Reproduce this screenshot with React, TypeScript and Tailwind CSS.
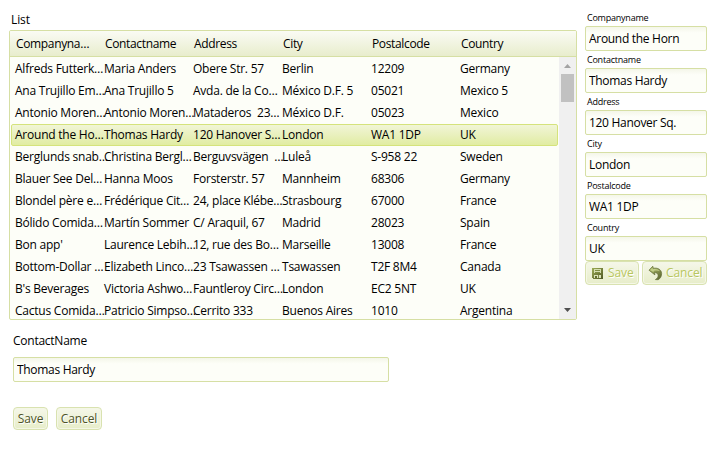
import React, { useState } from "react";

const columns = ["Companyna…", "Contactname", "Address", "City", "Postalcode", "Country"];

const rows: string[][] = [
  ["Alfreds Futterk…", "Maria Anders", "Obere Str. 57", "Berlin", "12209", "Germany"],
  ["Ana Trujillo Em…", "Ana Trujillo 5", "Avda. de la Co…", "México D.F. 5", "05021", "Mexico 5"],
  ["Antonio Moren…", "Antonio Moren…", "Mataderos  23…", "México D.F.", "05023", "Mexico"],
  ["Around the Ho…", "Thomas Hardy", "120 Hanover S…", "London", "WA1 1DP", "UK"],
  ["Berglunds snab…", "Christina Bergl…", "Berguvsvägen  …", "Luleå", "S-958 22", "Sweden"],
  ["Blauer See Del…", "Hanna Moos", "Forsterstr. 57", "Mannheim", "68306", "Germany"],
  ["Blondel père e…", "Frédérique Cit…", "24, place Klébe…", "Strasbourg", "67000", "France"],
  ["Bólido Comida…", "Martín Sommer", "C/ Araquil, 67", "Madrid", "28023", "Spain"],
  ["Bon app'", "Laurence Lebih…", "12, rue des Bo…", "Marseille", "13008", "France"],
  ["Bottom-Dollar …", "Elizabeth Linco…", "23 Tsawassen …", "Tsawassen", "T2F 8M4", "Canada"],
  ["B's Beverages", "Victoria Ashwo…", "Fauntleroy Circ…", "London", "EC2 5NT", "UK"],
  ["Cactus Comida…", "Patricio Simpso…", "Cerrito 333", "Buenos Aires", "1010", "Argentina"],
];

const fields: [string, string][] = [
  ["Companyname", "Around the Horn"],
  ["Contactname", "Thomas Hardy"],
  ["Address", "120 Hanover Sq."],
  ["City", "London"],
  ["Postalcode", "WA1 1DP"],
  ["Country", "UK"],
];

const inputStyle =
  "block rounded-[2px] border border-[#d6dfa4] bg-[#fdfef8] bg-linear-to-b from-[#f4f6e9] to-[#fdfef8] to-25% pl-[3px] outline-none";
const buttonStyle =
  "flex items-center rounded-[4px] border border-[#d9e2b0] bg-linear-to-b from-[#f5f7e9] to-[#e7edc9] shadow-[inset_0_0_0_1px_#f4f7e6] [text-shadow:1px_1px_0_#fff]";

function SaveIcon() {
  return (
    <svg width="11" height="11" viewBox="0 0 11 11" shapeRendering="crispEdges">
      <defs>
        <linearGradient id="disk" x1="0" y1="0" x2="1" y2="1">
          <stop offset="0" stopColor="#9dac55" />
          <stop offset="1" stopColor="#4f5826" />
        </linearGradient>
      </defs>
      <path d="M0 0h11v11H1L0 10z" fill="url(#disk)" />
      <path d="M2 1h7v4H2z" fill="#d5deb0" />
      <path d="M3 2h5v1H3zM3 4h5v1H3z" fill="#7f8d43" />
      <path d="M2 7h7v3H2z" fill="#dbe3b9" />
      <path d="M3 8h2v2H3z" fill="#646f31" />
      <path d="M6 7h1v3H6z" fill="#818d49" />
    </svg>
  );
}

function UndoIcon() {
  return (
    <svg width="15" height="16" viewBox="0 0 15 16">
      <defs>
        <linearGradient id="arrow" x1="0" y1="0" x2="1" y2="1">
          <stop offset="0" stopColor="#b4c36d" />
          <stop offset="1" stopColor="#58622e" />
        </linearGradient>
      </defs>
      <path
        d="M1 5.2 4.8 1.2l.5 2.1c4.3-.8 8.2 1.2 8.3 5.2 0 2.8-1 4.8-3.4 6.2l-2.8-.1c2.4-1.4 3.3-3.4 2.5-5.2-.6-1.3-1.9-1.9-3.4-1.7l.4 2.2z"
        fill="url(#arrow)"
        stroke="#606b35"
        strokeWidth=".7"
        strokeLinejoin="round"
      />
      <path d="M2.2 5.1 4.4 2.7l.4 1.6c3.3-.6 5.8.2 7.1 1.9-1.9-.8-3.9-.8-6.4-.3l.2 1.4z" fill="#c3cf89" />
    </svg>
  );
}

export default function App() {
  const [selected, setSelected] = useState(3);
  return (
    <main className="flex h-[449px] w-[725px] overflow-hidden bg-white font-['Open_Sans','Noto_Sans',sans-serif] text-[12px] leading-4 tracking-[-0.1px] text-black">
      <section className="ml-[9px] w-[568px] shrink-0">
        <h2 className="h-[30px] pl-[2px] pt-[12px]">List</h2>
        <div className="h-[290px] overflow-hidden rounded-[2px] border border-[#d6dfa4] bg-[#fdfef8]">
          <div className="flex h-[26px] items-center border-b border-[#d6dfa4] bg-linear-to-b from-[#fafbf4] to-[#e8edcd] pl-[6px] tracking-[-0.35px]">
            {columns.map((column) => (
              <span key={column} className="w-[89px] shrink-0 whitespace-pre">{column}</span>
            ))}
          </div>
          <div className="flex h-[262px] tracking-[-0.23px]">
            <div className="w-[549px] pl-px pt-px">
              {rows.map((row, index) => (
                <div
                  key={row[0]}
                  onClick={() => setSelected(index)}
                  className={
                    index === selected
                      ? "flex h-[22px] w-[547px] items-center rounded-[2px] border border-[#d5e37c] bg-linear-to-b from-[#f1f5d7] to-[#e1eca2] pl-[3px]"
                      : "flex h-[22px] w-[547px] items-center border border-transparent pl-[3px]"
                  }
                >
                  {row.map((cell, i) => (
                    <span key={i} className="w-[89px] shrink-0 whitespace-pre">{cell}</span>
                  ))}
                </div>
              ))}
            </div>
            <div className="flex w-[17px] flex-col items-center justify-between bg-[#f0f0f0] pb-[7px] pt-[7px]">
              <div className="flex flex-col items-center gap-[6px]">
                <svg width="7" height="4" viewBox="0 0 7 4"><path d="M0 4 3.5 0 7 4z" fill="#a3a3a3" /></svg>
                <div className="h-[28px] w-[13px] bg-[#c1c1c1]" />
              </div>
              <svg width="7" height="4" viewBox="0 0 7 4"><path d="M0 0h7L3.5 4z" fill="#505050" /></svg>
            </div>
          </div>
        </div>
        <div className="ml-[4px] pt-[13px]">
          <label className="block h-[24px] tracking-[-0.25px]">ContactName</label>
          <input aria-label="ContactName" defaultValue="Thomas Hardy" className={inputStyle + " h-[25px] w-[376px] tracking-[-0.3px]"} />
          <div className="mt-[25px] flex gap-[8px] text-[#4d5328]">
            <button className={buttonStyle + " h-[23px] w-[35px] justify-center"}>Save</button>
            <button className={buttonStyle + " h-[23px] w-[46px] justify-center"}>Cancel</button>
          </div>
        </div>
      </section>
      <aside className="ml-[8px] w-[122px] shrink-0 pt-[10px]">
        {fields.map(([label, value]) => (
          <div key={label} className="h-[42px]">
            <label className="block h-[16px] pl-[2px] text-[9px] tracking-[-0.23px]">{label}</label>
            <input aria-label={label} defaultValue={value} className={inputStyle + " h-[25px] w-[122px] tracking-[-0.3px]"} />
          </div>
        ))}
        <div className="-mt-px flex justify-between text-[#b8c65f]">
          <button className={buttonStyle + " h-[24px] w-[54px] gap-[5px] pl-[6px]"}><SaveIcon /><span>Save</span></button>
          <button className={buttonStyle + " h-[24px] w-[65px] gap-[3px] pl-[5px]"}><UndoIcon /><span>Cancel</span></button>
        </div>
      </aside>
    </main>
  );
}
